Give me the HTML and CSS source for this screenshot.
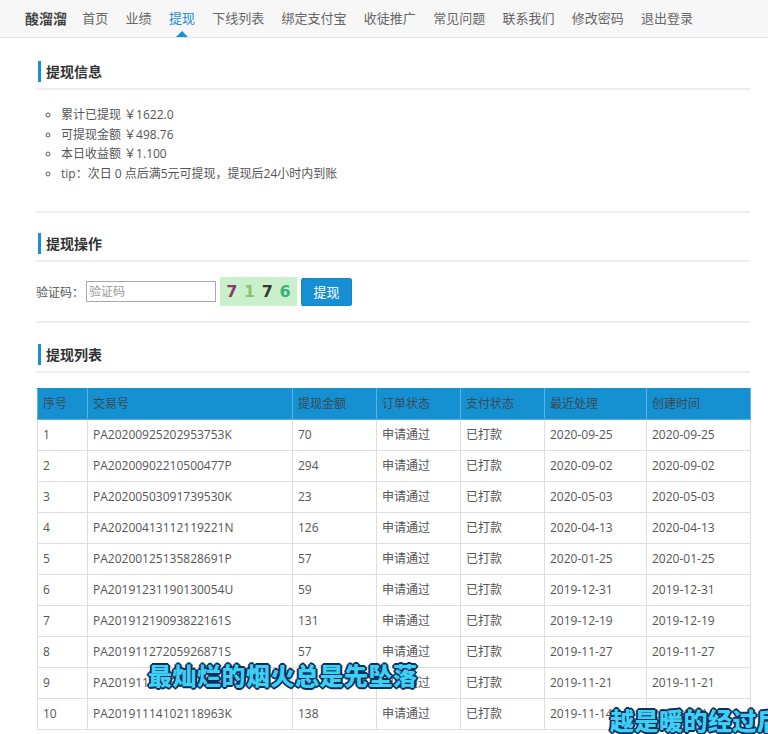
FILE: index.html
```html
<!DOCTYPE html>
<html lang="zh-CN">
<head>
<meta charset="utf-8">
<title>提现</title>
<link rel="stylesheet" href="styles.css">
</head>
<body>
<nav class="nav">
  <span class="brand">酸溜溜</span>
  <a class="nav-item">首页</a>
  <a class="nav-item">业绩</a>
  <a class="nav-item active">提现</a>
  <a class="nav-item">下线列表</a>
  <a class="nav-item">绑定支付宝</a>
  <a class="nav-item">收徒推广</a>
  <a class="nav-item">常见问题</a>
  <a class="nav-item">联系我们</a>
  <a class="nav-item">修改密码</a>
  <a class="nav-item">退出登录</a>
</nav>

<main class="main">
  <section class="section first">
    <div class="sec-head"><h2 class="sec-title">提现信息</h2></div>
    <ul class="info">
      <li>累计已提现 ￥1622.0</li>
      <li>可提现金额 ￥498.76</li>
      <li>本日收益额 ￥1.100</li>
      <li>tip：次日 0 点后满5元可提现，提现后24小时内到账</li>
    </ul>
  </section>

  <section class="section second">
    <div class="sec-head"><h2 class="sec-title">提现操作</h2></div>
    <div class="form-row">
      <label class="label">验证码：</label>
      <input class="input" type="text" placeholder="验证码">
      <div class="captcha">
        <span class="c1">7</span><span class="c2">1</span><span class="c3">7</span><span class="c4">6</span>
      </div>
      <button class="btn">提现</button>
    </div>
  </section>

  <section class="section last">
    <div class="sec-head"><h2 class="sec-title">提现列表</h2></div>
    <table class="table">
      <colgroup>
        <col class="w1"><col class="w2"><col class="w3"><col class="w3"><col class="w3"><col class="w4"><col class="w5">
      </colgroup>
      <thead>
        <tr><th>序号</th><th>交易号</th><th>提现金额</th><th>订单状态</th><th>支付状态</th><th>最近处理</th><th>创建时间</th></tr>
      </thead>
      <tbody>
        <tr><td>1</td><td>PA20200925202953753K</td><td>70</td><td>申请通过</td><td>已打款</td><td>2020-09-25</td><td>2020-09-25</td></tr>
        <tr><td>2</td><td>PA20200902210500477P</td><td>294</td><td>申请通过</td><td>已打款</td><td>2020-09-02</td><td>2020-09-02</td></tr>
        <tr><td>3</td><td>PA20200503091739530K</td><td>23</td><td>申请通过</td><td>已打款</td><td>2020-05-03</td><td>2020-05-03</td></tr>
        <tr><td>4</td><td>PA20200413112119221N</td><td>126</td><td>申请通过</td><td>已打款</td><td>2020-04-13</td><td>2020-04-13</td></tr>
        <tr><td>5</td><td>PA20200125135828691P</td><td>57</td><td>申请通过</td><td>已打款</td><td>2020-01-25</td><td>2020-01-25</td></tr>
        <tr><td>6</td><td>PA20191231190130054U</td><td>59</td><td>申请通过</td><td>已打款</td><td>2019-12-31</td><td>2019-12-31</td></tr>
        <tr><td>7</td><td>PA20191219093822161S</td><td>131</td><td>申请通过</td><td>已打款</td><td>2019-12-19</td><td>2019-12-19</td></tr>
        <tr><td>8</td><td>PA20191127205926871S</td><td>57</td><td>申请通过</td><td>已打款</td><td>2019-11-27</td><td>2019-11-27</td></tr>
        <tr><td>9</td><td>PA20191121183526404T</td><td>60</td><td>申请通过</td><td>已打款</td><td>2019-11-21</td><td>2019-11-21</td></tr>
        <tr><td>10</td><td>PA20191114102118963K</td><td>138</td><td>申请通过</td><td>已打款</td><td>2019-11-14</td><td>2019-11-14</td></tr>
      </tbody>
    </table>
  </section>
</main>

<div class="subtitle sub1">最灿烂的烟火总是先坠落</div>
<div class="subtitle sub2">越是暖的经过后</div>
</body>
</html>
```

FILE: styles.css
```css
html, body {
  margin: 0;
  padding: 0;
  overflow: hidden;
  background: #fff;
}
body {
  font-family: "Open Sans", "Noto Sans CJK SC", sans-serif;
  color: #555;
  font-size: 12px;
  position: relative;
  width: 768px;
  height: 734px;
}

/* nav */
.nav {
  height: 37px;
  background: #f7f7f7;
  border-bottom: 1px solid #e3e3e3;
  display: flex;
  align-items: center;
  padding-left: 25px;
  column-gap: 17.3px;
  box-sizing: content-box;
}
.brand {
  font-size: 14px;
  font-weight: bold;
  color: #444;
  margin-right: -2px;
  line-height: 37px;
}
.nav-item {
  font-size: 13px;
  color: #666;
  line-height: 37px;
  position: relative;
  text-decoration: none;
}
.nav-item.active {
  color: #1b8fd5;
}
.nav-item.active::after {
  content: "";
  position: absolute;
  left: 50%;
  bottom: 0;
  margin-left: -6px;
  border-left: 6px solid transparent;
  border-right: 6px solid transparent;
  border-bottom: 6px solid #1b8fd5;
}

/* main */
.main {
  width: 714px;
  margin-left: 36px;
}
.section {
  padding-top: 20px;
  border-bottom: 2px solid #eee;
}
.section.first {
  padding-top: 23px;
  padding-bottom: 28px;
}
.section.last {
  padding-top: 21px;
  border-bottom: none;
}
.sec-head {
  padding-bottom: 6px;
  border-bottom: 2px solid #eee;
}
.sec-title {
  margin: 0 0 0 2px;
  border-left: 3px solid #1b8fd5;
  padding-left: 5px;
  font-size: 14px;
  font-weight: bold;
  color: #333;
  line-height: 21px;
}

.info {
  margin: 15px 0 0;
  padding-left: 25px;
  list-style: circle;
  line-height: 19.5px;
  font-size: 12px;
  color: #555;
}

.form-row {
  display: flex;
  align-items: center;
  margin-top: 15px;
  height: 29px;
  margin-bottom: 15px;
}
.label {
  font-size: 12px;
  color: #555;
  width: 50px;
}
.input {
  width: 130px;
  height: 21px;
  box-sizing: border-box;
  border: 1px solid #a9a9a9;
  padding: 0 2px;
  font-family: "Open Sans", "Noto Sans CJK SC", sans-serif;
  font-size: 12px;
  color: #555;
  margin: 0;
}
.input::placeholder {
  color: #999;
}
.captcha {
  width: 77px;
  height: 29px;
  margin-left: 4px;
  background: #c9f0cb;
  display: flex;
  align-items: center;
  justify-content: space-around;
  padding: 0 3px;
  box-sizing: border-box;
  font-family: "DejaVu Sans", sans-serif;
  font-weight: bold;
  font-size: 16px;
}
.c1 { color: #8b3a6e; }
.c2 { color: #8fc26a; }
.c3 { color: #3a3a2c; }
.c4 { color: #3ab27a; }
.btn {
  margin-left: 4px;
  width: 51px;
  height: 28px;
  background: #178fd4;
  color: #fff;
  border: 1px solid #1486c8;
  border-radius: 2px;
  font-family: "Open Sans", "Noto Sans CJK SC", sans-serif;
  font-size: 13px;
  padding: 0;
}

.table {
  margin-top: 15px;
  margin-left: 1px;
  width: 713px;
  border-collapse: collapse;
  table-layout: fixed;
  font-size: 12px;
}
.w1 { width: 50px; }
.w2 { width: 205px; }
.w3 { width: 84px; }
.w4 { width: 102px; }
.w5 { width: 104px; }
.table th, .table td {
  border: 1px solid #dedede;
  padding: 6px 5px;
  line-height: 18px;
  text-align: left;
  font-weight: normal;
  white-space: nowrap;
  overflow: hidden;
}
.table th {
  background: #1590d1;
  color: #3d4a54;
  border-color: #5fb3e0;
  border-top-color: #1590d1;
}
.table td {
  color: #555;
}

/* subtitles overlay */
.subtitle {
  position: absolute;
  font-family: "Noto Sans CJK SC", sans-serif;
  font-weight: 900;
  font-size: 24px;
  line-height: 28px;
  color: #3ed0f4;
  white-space: nowrap;
  text-shadow:
    1px 1px 0 #0b2f5c, -1px -1px 0 #0b2f5c, 1px -1px 0 #0b2f5c, -1px 1px 0 #0b2f5c,
    2px 0 0 #0b2f5c, -2px 0 0 #0b2f5c, 0 2px 0 #0b2f5c, 0 -2px 0 #0b2f5c;
}
.sub1 {
  left: 148px;
  top: 661px;
  letter-spacing: 0.5px;
}
.sub2 {
  left: 610px;
  top: 706px;
  letter-spacing: 0.5px;
}
```
